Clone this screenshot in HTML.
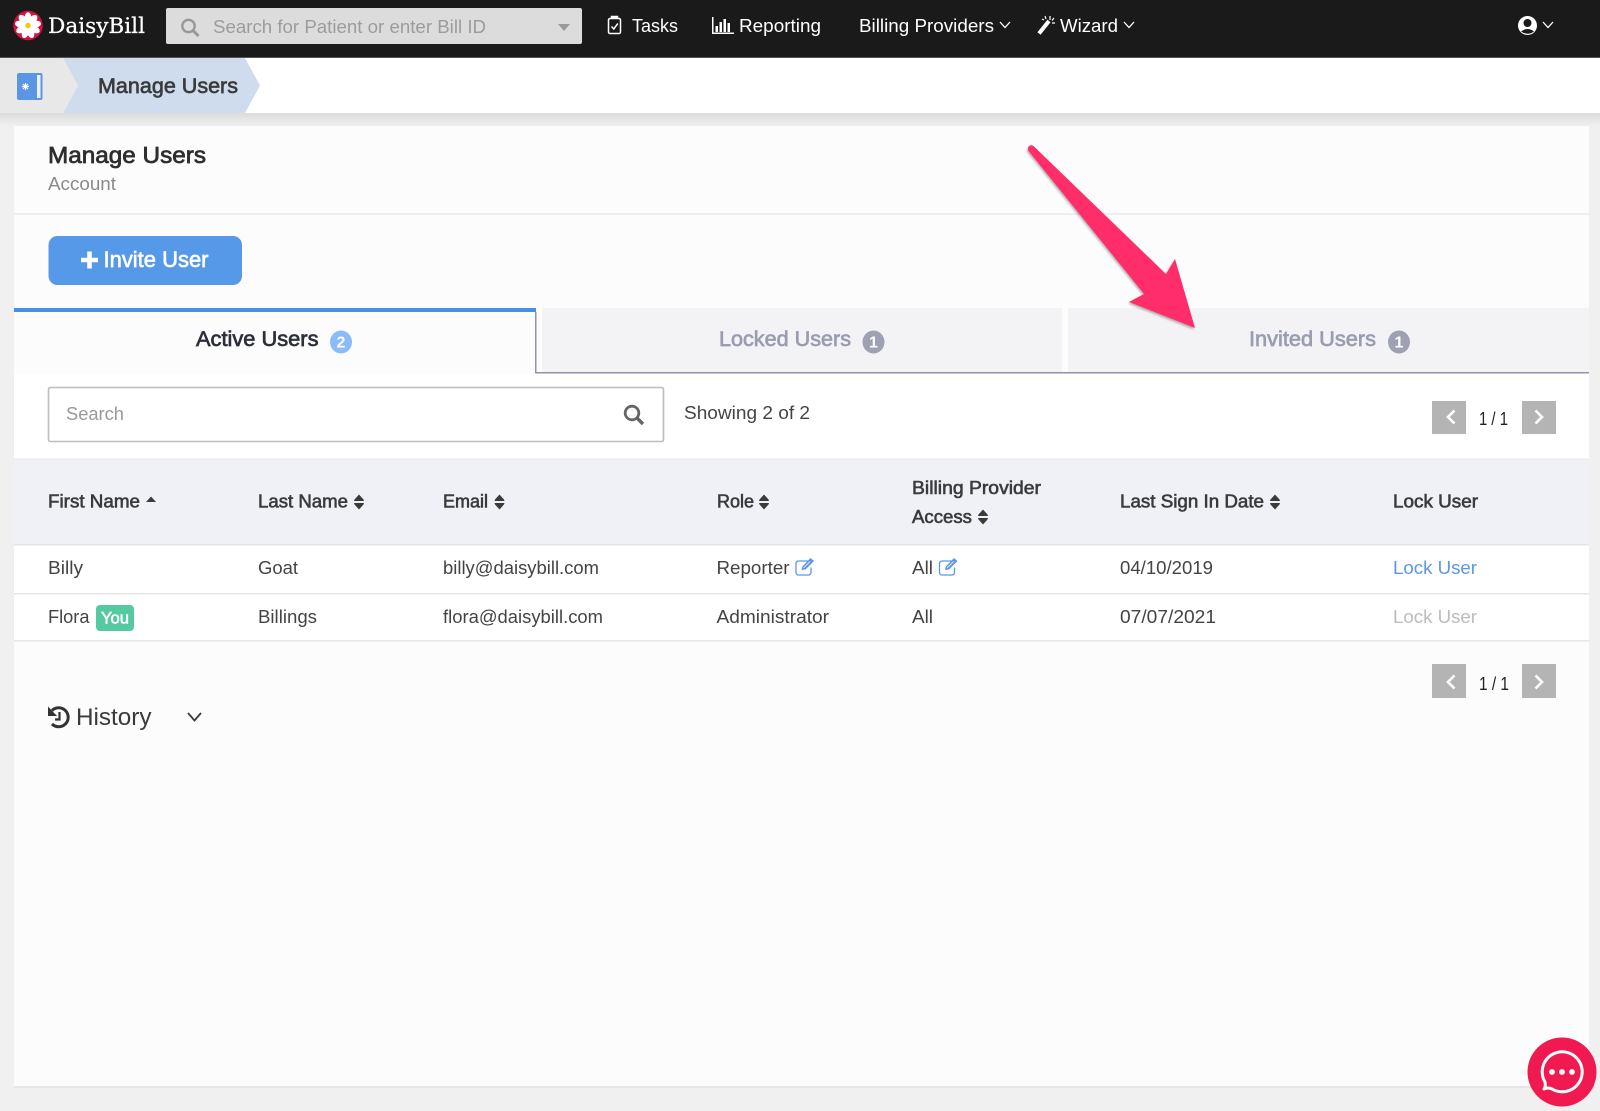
<!DOCTYPE html>
<html lang="en">
<head>
<meta charset="utf-8">
<title>Manage Users - DaisyBill</title>
<style>
html,body{margin:0;padding:0;width:1600px;height:1111px;overflow:hidden;background:#f0f0f0}
svg{display:block;filter:blur(.3px)}
text{font-family:"Liberation Sans",sans-serif;font-size:18px;fill:#3a3a3a}
.nav{fill:#fff}
.h{fill:#3b3b3b;stroke:#3b3b3b;stroke-width:.6px;font-size:18px}
.r{fill:#444}
.tab{font-size:21.5px;stroke-width:.7px}
</style>
</head>
<body>
<svg xmlns="http://www.w3.org/2000/svg" width="1600" height="1111" viewBox="0 0 1600 1111">
<defs>
<linearGradient id="sh" x1="0" y1="0" x2="0" y2="1"><stop offset="0" stop-color="#dcdcdc"/><stop offset="1" stop-color="#f0f0f0"/></linearGradient>
<filter id="ds" x="-10%" y="-10%" width="120%" height="120%"><feDropShadow dx="-1" dy="1.5" stdDeviation="1" flood-color="#000" flood-opacity=".3"/></filter>
<g id="sort"><path d="M-5 -1 L-4.5 -2.5 L0 -7.5 L4.5 -2.5 L5 -1Z M-5 1 L-4.5 2.5 L0 7.5 L4.5 2.5 L5 1Z" fill="#3b3b3b"/></g>
<g id="edit" fill="none" stroke="#5c96e6" stroke-width="1.3"><path d="M4 -5.5H-6a2.5 2.5 0 0 0-2.5 2.5V6a2.5 2.5 0 0 0 2.5 2.5H4a2.5 2.5 0 0 0 2.5-2.5V1"/><path d="M-3 3.5 L-2.2 0 L6 -8.5 L9.5 -5.5 L1 3Z" fill="#5c96e6" stroke="none"/><path d="M-1 1.5 L5.5 -5" stroke="#fff" stroke-width=".8"/></g>
<g id="chev"><path d="M-5 -3 L0 2.5 L5 -3" fill="none" stroke="#fff" stroke-width="1.3"/></g>
<g id="pl"><path d="M3.5 -6.5 L-3 0 L3.5 6.5" fill="none" stroke="#fff" stroke-width="2.6"/></g>
<g id="pr"><path d="M-3.5 -6.5 L3 0 L-3.5 6.5" fill="none" stroke="#fff" stroke-width="2.6"/></g>
</defs>

<!-- page background -->
<rect width="1600" height="1111" fill="#f0f0f0"/>

<!-- top nav -->
<rect width="1600" height="57" fill="#1a1a1a"/>
<rect y="57" width="1600" height="1" fill="#555"/>
<circle cx="28" cy="25.5" r="14.7" fill="#d3123f"/>
<g fill="#fff" transform="translate(28 25.5)">
<ellipse cx="0" cy="-7.8" rx="3.4" ry="5.4"/>
<ellipse cx="0" cy="-7.8" rx="3.4" ry="5.4" transform="rotate(40)"/>
<ellipse cx="0" cy="-7.8" rx="3.4" ry="5.4" transform="rotate(80)"/>
<ellipse cx="0" cy="-7.8" rx="3.4" ry="5.4" transform="rotate(120)"/>
<ellipse cx="0" cy="-7.8" rx="3.4" ry="5.4" transform="rotate(160)"/>
<ellipse cx="0" cy="-7.8" rx="3.4" ry="5.4" transform="rotate(200)"/>
<ellipse cx="0" cy="-7.8" rx="3.4" ry="5.4" transform="rotate(240)"/>
<ellipse cx="0" cy="-7.8" rx="3.4" ry="5.4" transform="rotate(280)"/>
<ellipse cx="0" cy="-7.8" rx="3.4" ry="5.4" transform="rotate(320)"/>
<circle r="5" fill="#fff"/><circle r="2.8" fill="#f6c910"/>
</g>
<text x="48" y="33" textLength="97" lengthAdjust="spacingAndGlyphs" style="font-family:'DejaVu Serif','Liberation Serif',serif;font-size:21.5px;fill:#fff;stroke:#fff;stroke-width:.25px">DaisyBill</text>

<rect x="166" y="8" width="416" height="36" rx="2" fill="#dcdcdc"/>
<circle cx="188.5" cy="26" r="6.2" fill="none" stroke="#999" stroke-width="2.4"/>
<path d="M193 30.5 L198.5 36" stroke="#999" stroke-width="3"/>
<text x="213" y="33" textLength="273" lengthAdjust="spacingAndGlyphs" style="fill:#9c9c9c">Search for Patient or enter Bill ID</text>
<path d="M558 24 H570 L564 31Z" fill="#999"/>

<!-- tasks icon -->
<g fill="none" stroke="#fff" stroke-width="1.5"><rect x="608.5" y="18.5" width="12" height="15" rx="1.5"/><path d="M611.5 18.5 V16.5 H617.5 V18.5" fill="#fff"/><path d="M611.5 26.5 L613.8 29 L617.8 23.5"/></g>
<text class="nav" x="632" y="32" textLength="46" lengthAdjust="spacingAndGlyphs">Tasks</text>
<!-- reporting icon -->
<g fill="#fff"><rect x="712" y="17" width="1.5" height="17"/><rect x="712" y="32.5" width="22" height="1.5"/><rect x="715.5" y="26" width="2.5" height="6"/><rect x="719.5" y="22" width="2.5" height="10"/><rect x="723.5" y="19" width="2.5" height="13"/><rect x="727.5" y="23" width="2.5" height="9"/></g>
<text class="nav" x="739" y="32" textLength="82" lengthAdjust="spacingAndGlyphs">Reporting</text>
<text class="nav" x="859" y="32" textLength="135" lengthAdjust="spacingAndGlyphs">Billing Providers</text>
<use href="#chev" x="1005" y="25"/>
<!-- wizard icon -->
<path d="M1039 33.5 L1049 21" stroke="#fff" stroke-width="4"/>
<path d="M1050 16v4M1054 18l-2 2.5M1055 23h-3M1045 16l1 3M1042 19l2 1" stroke="#fff" stroke-width="1.2"/>
<text class="nav" x="1060" y="32" textLength="58" lengthAdjust="spacingAndGlyphs">Wizard</text>
<use href="#chev" x="1129" y="25"/>
<!-- user icon -->
<circle cx="1527.5" cy="25.5" r="9.5" fill="#fff"/>
<circle cx="1527.5" cy="23" r="4" fill="#1a1a1a"/>
<path d="M1521 31.5 Q1527.5 26.5 1534 31.5 Q1527.5 36 1521 31.5Z" fill="#1a1a1a"/>
<use href="#chev" x="1548" y="25"/>

<!-- breadcrumb -->
<rect y="58" width="1600" height="55" fill="#fff"/>
<rect y="113" width="1600" height="13" fill="url(#sh)"/>
<path d="M0 58 H63 L78 85.5 L63 113 H0Z" fill="#e8e8e8"/>
<path d="M63 58 H245 L260 85.5 L245 113 H63 L78 85.5Z" fill="#cfdcee"/>
<rect x="17" y="73" width="25.5" height="27" rx="2" fill="#5b95e5"/>
<rect x="37" y="75" width="3.5" height="23" fill="#eef3fb"/>
<path d="M22 86.5h7M25.5 83v7M23 84l5 5M28 84l-5 5" stroke="#fff" stroke-width="1.2"/>
<text x="98" y="93" textLength="140" lengthAdjust="spacingAndGlyphs" style="font-size:21.5px;fill:#3a3a3a;stroke:#3a3a3a;stroke-width:.65px">Manage Users</text>

<!-- card -->
<rect x="14" y="126" width="1575" height="960" fill="#fcfcfc"/>
<rect x="14" y="1086" width="1575" height="2" fill="#e6e6e6"/>
<text x="48" y="163" textLength="158" lengthAdjust="spacingAndGlyphs" style="font-size:23.5px;fill:#2e2e2e;stroke:#2e2e2e;stroke-width:.75px">Manage Users</text>
<text x="48" y="190" textLength="68" lengthAdjust="spacingAndGlyphs" style="fill:#8a8a8a">Account</text>
<rect x="14" y="213" width="1575" height="2" fill="#eeeeee"/>

<!-- invite button -->
<rect x="48.5" y="236" width="193.5" height="49" rx="9" fill="#5599e8"/>
<path d="M81 260 H98 M89.5 251.5 V268.5" stroke="#fff" stroke-width="4.6"/>
<text x="103.5" y="267" textLength="105" lengthAdjust="spacingAndGlyphs" style="font-size:22.5px;fill:#fff;stroke:#fff;stroke-width:.65px">Invite User</text>

<!-- tabs -->
<rect x="14" y="308" width="522" height="4" fill="#4a90e2"/>
<rect x="542" y="308" width="520" height="64" fill="#f3f3f6"/>
<rect x="1068" y="308" width="521" height="64" fill="#f3f3f6"/>
<rect x="535" y="312" width="1.5" height="61" fill="#8f93ab"/>
<rect x="535" y="372" width="1054" height="1.5" fill="#8f93ab"/>
<text class="tab" x="196" y="346" textLength="122.5" lengthAdjust="spacingAndGlyphs" style="fill:#2c2f3a;stroke:#2c2f3a">Active Users</text>
<ellipse cx="341" cy="342" rx="11" ry="11.5" fill="#8abcfb"/>
<text x="341" y="347.5" text-anchor="middle" style="font-size:16px;font-weight:700;fill:#fff">2</text>
<text class="tab" x="719" y="346" textLength="132" lengthAdjust="spacingAndGlyphs" style="fill:#9a9db0;stroke:#9a9db0">Locked Users</text>
<ellipse cx="873.5" cy="342" rx="11" ry="11.5" fill="#9ea1b3"/>
<text x="873.5" y="347.5" text-anchor="middle" style="font-size:16px;font-weight:700;fill:#fff">1</text>
<text class="tab" x="1249" y="346" textLength="127" lengthAdjust="spacingAndGlyphs" style="fill:#9a9db0;stroke:#9a9db0">Invited Users</text>
<ellipse cx="1399" cy="342" rx="11" ry="11.5" fill="#9ea1b3"/>
<text x="1399" y="347.5" text-anchor="middle" style="font-size:16px;font-weight:700;fill:#fff">1</text>

<!-- search row -->
<rect x="14" y="373.5" width="1575" height="85.5" fill="#fff"/>
<rect x="14" y="373" width="521" height="1" fill="#fcfcfc"/>
<rect x="48.5" y="387.5" width="615" height="54" rx="2" fill="#fff" stroke="#bcbcbc" stroke-width="1.6"/>
<text x="66" y="420" textLength="58" lengthAdjust="spacingAndGlyphs" style="fill:#999">Search</text>
<circle cx="632" cy="413" r="6.8" fill="none" stroke="#666" stroke-width="2.8"/>
<path d="M637 418 L643 424" stroke="#666" stroke-width="3.4"/>
<text x="684" y="419" textLength="126" lengthAdjust="spacingAndGlyphs" style="fill:#444">Showing 2 of 2</text>
<rect x="1432" y="401" width="34" height="33" fill="#b4b4b4"/>
<use href="#pl" x="1451" y="417"/>
<text x="1479" y="425" textLength="29" lengthAdjust="spacingAndGlyphs" style="fill:#222">1 / 1</text>
<rect x="1522" y="401" width="34" height="33" fill="#b4b4b4"/>
<use href="#pr" x="1539" y="417"/>

<!-- table header -->
<rect x="14" y="458.5" width="1575" height="1" fill="#e6e7ea"/>
<rect x="14" y="459.5" width="1575" height="84.5" fill="#eff1f7"/>
<rect x="14" y="544" width="1575" height="1.5" fill="#e4e5e8"/>
<text class="h" x="48" y="507.5" textLength="92" lengthAdjust="spacingAndGlyphs">First Name</text>
<path d="M146 502 L151 496.5 L156 502Z" fill="#3b3b3b"/>
<text class="h" x="258" y="507.5" textLength="90" lengthAdjust="spacingAndGlyphs">Last Name</text>
<use href="#sort" x="359" y="502"/>
<text class="h" x="443" y="507.5" textLength="45" lengthAdjust="spacingAndGlyphs">Email</text>
<use href="#sort" x="499.5" y="502"/>
<text class="h" x="717" y="507.5" textLength="37" lengthAdjust="spacingAndGlyphs">Role</text>
<use href="#sort" x="764" y="502"/>
<text class="h" x="912" y="494" textLength="129" lengthAdjust="spacingAndGlyphs">Billing Provider</text>
<text class="h" x="912" y="523" textLength="60" lengthAdjust="spacingAndGlyphs">Access</text>
<use href="#sort" x="983" y="517"/>
<text class="h" x="1120" y="507.5" textLength="144" lengthAdjust="spacingAndGlyphs">Last Sign In Date</text>
<use href="#sort" x="1275" y="502"/>
<text class="h" x="1393" y="507.5" textLength="85" lengthAdjust="spacingAndGlyphs">Lock User</text>

<!-- rows -->
<rect x="14" y="545.5" width="1575" height="95" fill="#fff"/>
<rect x="14" y="593" width="1575" height="1.5" fill="#e6e6e6"/>
<rect x="14" y="640" width="1575" height="1.5" fill="#e6e6e6"/>

<text class="r" x="48" y="574" textLength="35" lengthAdjust="spacingAndGlyphs">Billy</text>
<text class="r" x="258" y="574" textLength="40" lengthAdjust="spacingAndGlyphs">Goat</text>
<text class="r" x="443" y="574" textLength="156" lengthAdjust="spacingAndGlyphs">billy@daisybill.com</text>
<text class="r" x="716.5" y="574" textLength="73" lengthAdjust="spacingAndGlyphs">Reporter</text>
<use href="#edit" x="804.5" y="566.5"/>
<text class="r" x="912" y="574" textLength="21" lengthAdjust="spacingAndGlyphs">All</text>
<use href="#edit" x="948" y="566.5"/>
<text class="r" x="1120" y="574" textLength="93" lengthAdjust="spacingAndGlyphs">04/10/2019</text>
<text x="1393" y="574" textLength="84" lengthAdjust="spacingAndGlyphs" style="fill:#5c96e6">Lock User</text>

<text class="r" x="48" y="623" textLength="41.5" lengthAdjust="spacingAndGlyphs">Flora</text>
<rect x="96" y="605" width="38" height="26" rx="4" fill="#55c9a0"/>
<text x="101" y="623.5" textLength="28" lengthAdjust="spacingAndGlyphs" style="font-size:17px;fill:#fff;stroke:#fff;stroke-width:.6px">You</text>
<text class="r" x="258" y="623" textLength="59" lengthAdjust="spacingAndGlyphs">Billings</text>
<text class="r" x="443" y="623" textLength="160" lengthAdjust="spacingAndGlyphs">flora@daisybill.com</text>
<text class="r" x="716.5" y="623" textLength="112.5" lengthAdjust="spacingAndGlyphs">Administrator</text>
<text class="r" x="912" y="623" textLength="21" lengthAdjust="spacingAndGlyphs">All</text>
<text class="r" x="1120" y="623" textLength="96" lengthAdjust="spacingAndGlyphs">07/07/2021</text>
<text x="1393" y="623" textLength="84" lengthAdjust="spacingAndGlyphs" style="fill:#bcbcbc">Lock User</text>

<!-- bottom pager -->
<rect x="1432" y="664" width="34" height="34" fill="#b4b4b4"/>
<use href="#pl" x="1451" y="682"/>
<text x="1479" y="690" textLength="30" lengthAdjust="spacingAndGlyphs" style="fill:#222">1 / 1</text>
<rect x="1522" y="664" width="34" height="34" fill="#b4b4b4"/>
<use href="#pr" x="1539" y="682"/>

<!-- history -->
<path d="M52 710.5 A9.5 9.5 0 1 1 52 724" fill="none" stroke="#333" stroke-width="3"/>
<path d="M48 706.5 L48 716 L57 716Z" fill="#333"/>
<path d="M59.5 712 V719.5 H55" fill="none" stroke="#333" stroke-width="2.2"/>
<text x="76" y="725" textLength="75.5" lengthAdjust="spacingAndGlyphs" style="font-size:24px;fill:#3a3a3a">History</text>
<path d="M188 713 L194.5 720.5 L201 713" fill="none" stroke="#3a3a3a" stroke-width="1.8"/>

<!-- annotation arrow -->
<path d="M1028.5 151 Q1027 147 1030 145.5 Q1032.5 144.5 1035 147.5 L1166 274 L1175 259 L1195 328 L1129 302 L1144 294Z" fill="#ff2d6b" filter="url(#ds)"/>

<!-- chat bubble -->
<circle cx="1562" cy="1072" r="34.5" fill="#f01a50"/>
<path d="M1544 1089 Q1546 1086 1545 1082 A20 20 0 1 1 1552 1089 Q1548 1087 1544 1089Z" fill="none" stroke="#fff" stroke-width="3" stroke-linejoin="round"/>
<circle cx="1552" cy="1072" r="2.9" fill="#fff"/>
<circle cx="1562" cy="1072" r="2.9" fill="#fff"/>
<circle cx="1572" cy="1072" r="2.9" fill="#fff"/>
</svg>
</body>
</html>
